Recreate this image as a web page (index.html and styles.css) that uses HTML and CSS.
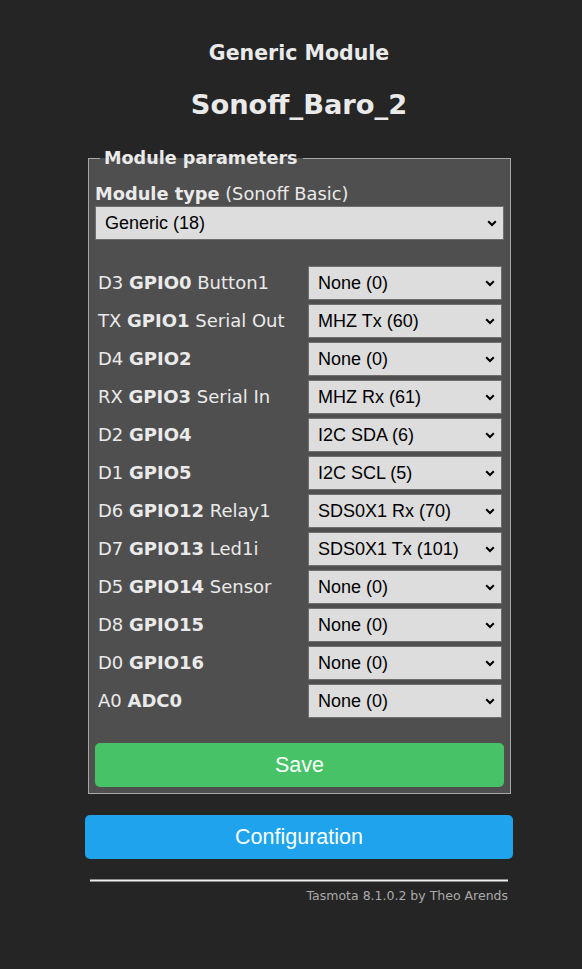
FILE: index.html
```html
<!DOCTYPE html>
<html>
<head>
<meta charset="utf-8">
<title>Generic Module</title>
<link rel="stylesheet" href="styles.css">
</head>
<body>
<div class="page">
  <h3 class="module-title">Generic Module</h3>
  <h2 class="device-title">Sonoff_Baro_2</h2>
  <fieldset class="params">
    <legend class="params-legend">Module parameters</legend>
    <div class="type-label"><b>Module type</b> (Sonoff Basic)</div>
    <select class="sel sel-wide"><option>Generic (18)</option></select>
    <div class="gpio-grid">
      <div class="lbl">D3 <b>GPIO0</b> Button1</div><select class="sel"><option>None (0)</option></select>
      <div class="lbl">TX <b>GPIO1</b> Serial Out</div><select class="sel"><option>MHZ Tx (60)</option></select>
      <div class="lbl">D4 <b>GPIO2</b></div><select class="sel"><option>None (0)</option></select>
      <div class="lbl">RX <b>GPIO3</b> Serial In</div><select class="sel"><option>MHZ Rx (61)</option></select>
      <div class="lbl">D2 <b>GPIO4</b></div><select class="sel"><option>I2C SDA (6)</option></select>
      <div class="lbl">D1 <b>GPIO5</b></div><select class="sel"><option>I2C SCL (5)</option></select>
      <div class="lbl">D6 <b>GPIO12</b> Relay1</div><select class="sel"><option>SDS0X1 Rx (70)</option></select>
      <div class="lbl">D7 <b>GPIO13</b> Led1i</div><select class="sel"><option>SDS0X1 Tx (101)</option></select>
      <div class="lbl">D5 <b>GPIO14</b> Sensor</div><select class="sel"><option>None (0)</option></select>
      <div class="lbl">D8 <b>GPIO15</b></div><select class="sel"><option>None (0)</option></select>
      <div class="lbl">D0 <b>GPIO16</b></div><select class="sel"><option>None (0)</option></select>
      <div class="lbl">A0 <b>ADC0</b></div><select class="sel"><option>None (0)</option></select>
    </div>
    <button class="btn btn-save">Save</button>
  </fieldset>
  <button class="btn btn-config">Configuration</button>
  <div class="rule"></div>
  <div class="footer">Tasmota 8.1.0.2 by Theo Arends</div>
</div>
</body>
</html>
```

FILE: styles.css
```css
html, body {
  margin: 0;
  padding: 0;
}
body {
  background: #252525;
  color: #eaeaea;
  font-family: "DejaVu Sans", Verdana, sans-serif;
  font-size: 18px;
}
.page {
  width: 428px;
  margin-left: 85px;
  padding-top: 41px;
}
.module-title {
  margin: 0;
  text-align: center;
  font-size: 20.5px;
  line-height: 24px;
  font-weight: bold;
}
.device-title {
  margin: 25px 0 0 0;
  text-align: center;
  font-size: 27.3px;
  line-height: 30px;
  font-weight: bold;
}
.params {
  margin: 28px 2px 0 3px;
  padding: 0 7px 6px 6px;
  border: 1px solid #a6a6a6;
  background: #4f4f4f;
  min-width: 0;
}
.params-legend {
  padding: 0 5px 0 4px;
  margin-left: 5px;
  font-size: 17.6px;
  font-weight: bold;
  line-height: 20px;
}
.type-label {
  line-height: 20px;
  font-size: 17.8px;
  margin-top: 16px;
  margin-bottom: 2px;
  white-space: nowrap;
}
.sel {
  -webkit-appearance: none;
  appearance: none;
  display: block;
  box-sizing: border-box;
  height: 34px;
  margin: 0;
  padding: 0 28px 0 9px;
  border: 1px solid #6e6e6e;
  border-radius: 0;
  background: #dddddd url("data:image/svg+xml;utf8,<svg xmlns='http://www.w3.org/2000/svg' width='10' height='7' viewBox='0 0 10 7'><polyline points='1.2,1.3 5,5 8.8,1.3' fill='none' stroke='black' stroke-width='2'/></svg>") no-repeat right 6px center;
  color: #000;
  font-family: "Liberation Sans", Arial, sans-serif;
  font-size: 18px;
  width: 100%;
}
.sel-wide {
  width: 409px;
}
.gpio-grid {
  display: grid;
  grid-template-columns: 1fr 194px;
  row-gap: 4px;
  align-items: center;
  margin-top: 26px;
  padding: 0 0 0 3px;
  width: 404px;
}
.lbl {
  line-height: 20px;
  white-space: nowrap;
}
.btn {
  display: block;
  border: 0;
  border-radius: 5px;
  color: #faffff;
  font-family: "Liberation Sans", Arial, sans-serif;
  font-size: 21.5px;
  cursor: pointer;
}
.btn-save {
  width: 409px;
  height: 44px;
  margin-top: 25px;
  background: #47c266;
}
.btn-config {
  width: 428px;
  height: 44px;
  margin-top: 21px;
  background: #1fa3ec;
}
.rule {
  margin: 20px 5px 0 5px;
  height: 1px;
  background: #eeeeee;
  border: 1px solid #8a8a8a;
  border-left: 0;
  border-right: 0;
}
.footer {
  margin-top: 6px;
  padding-right: 5px;
  text-align: right;
  font-size: 12.5px;
  color: #aaaaaa;
}
```
